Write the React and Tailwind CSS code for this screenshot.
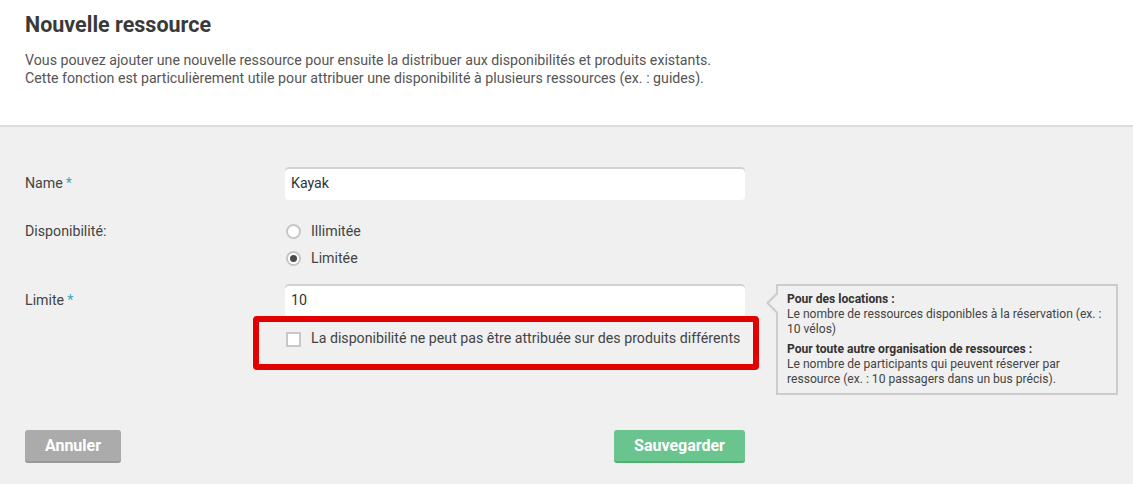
const Label = ({ children, required }) => (
  <div className="w-[260px] shrink-0 text-[14.2px] text-[#444]">
    {children}
    {required && <span className="ml-[3px] text-[#3ba8c0]">*</span>}
  </div>
);

const TextInput = ({ value }) => (
  <div className="w-[460px] h-[33px] rounded-[4px] bg-white shadow-[inset_0_2px_0_#d2d2d2] flex items-center px-[6px] text-[14.2px] text-[#333]">
    {value}
  </div>
);

const Radio = ({ checked, label }) => (
  <div className="flex items-center h-[27px]">
    <span className="w-[15px] h-[15px] rounded-full border-2 border-[#c6c6c6] bg-white flex items-center justify-center">
      {checked && <span className="w-[7px] h-[7px] rounded-full bg-[#4a4a4a]" />}
    </span>
    <span className="ml-[10px] text-[14.2px] text-[#444]">{label}</span>
  </div>
);

const App = () => {
  return (
    <div className="min-h-screen w-full bg-[#f0f0f0] font-['Roboto',sans-serif]">
      <div className="h-[127px] bg-white border-b-2 border-[#dcdcdc] px-[25px] pt-[10px]">
        <h1 className="text-[21.5px] leading-[30px] font-bold text-[#3a3a3a]">Nouvelle ressource</h1>
        <p className="mt-[11px] text-[14.2px] leading-[18px] text-[#555]">
          Vous pouvez ajouter une nouvelle ressource pour ensuite la distribuer aux disponibilités et produits existants.
          <br />
          Cette fonction est particulièrement utile pour attribuer une disponibilité à plusieurs ressources (ex. : guides).
        </p>
      </div>

      <div className="pl-[25px] pt-[40px]">
        <div className="flex items-center">
          <Label required>Name</Label>
          <TextInput value="Kayak" />
        </div>

        <div className="flex mt-[18px]">
          <div className="w-[260px] shrink-0 text-[14.2px] leading-[27px] text-[#444]">Disponibilité:</div>
          <div className="flex flex-col pl-[1px]">
            <Radio label="Illimitée" />
            <Radio checked label="Limitée" />
          </div>
        </div>

        <div className="flex items-center mt-[12px]">
          <Label required>Limite</Label>
          <div className="relative">
            <TextInput value="10" />
            {/* aide */}
            <div className="absolute left-[calc(100%+31px)] top-0 w-[342px] border-2 border-[#cccccc] bg-[#f0f0f0] pl-[9px] pt-[6px] pb-[6px] text-[12.1px] leading-[15px] text-[#444] whitespace-nowrap">
              <span className="absolute left-[-12px] top-[6px] w-0 h-0 border-y-[11px] border-y-transparent border-r-[11px] border-r-[#cccccc]" />
              <span className="absolute left-[-9px] top-[8px] w-0 h-0 border-y-[9px] border-y-transparent border-r-[9px] border-r-[#f0f0f0]" />
              <div className="font-bold text-[#333]">Pour des locations :</div>
              <div>
                Le nombre de ressources disponibles à la réservation (ex. :
                <br />
                10 vélos)
              </div>
              <div className="mt-[5px] font-bold text-[#333]">Pour toute autre organisation de ressources :</div>
              <div>
                Le nombre de participants qui peuvent réserver par
                <br />
                ressource (ex. : 10 passagers dans un bus précis).
              </div>
            </div>
          </div>
        </div>

        <div className="ml-[260px] mt-[11px] relative w-[460px] h-[22px] flex items-center pl-[1px]">
          <div className="absolute left-[-32px] right-[-14px] top-[-12px] bottom-[-20px] border-[6px] border-[#e30000] rounded-[4px]" />
          <span className="w-[15px] h-[15px] border-2 border-[#c8c8c8] bg-white" />
          <span className="ml-[10px] text-[14.2px] text-[#444]">
            La disponibilité ne peut pas être attribuée sur des produits différents
          </span>
        </div>

        <div className="w-[720px] flex justify-between mt-[80px]">
          <button className="w-[96px] h-[33px] rounded-[3px] bg-[#ababab] border-b-2 border-[#999] text-white text-[16px] font-bold">
            Annuler
          </button>
          <button className="w-[131px] h-[33px] rounded-[3px] bg-[#6ac48e] border-b-2 border-[#4fb074] text-white text-[16px] font-bold">
            Sauvegarder
          </button>
        </div>
      </div>
    </div>
  );
};

export default App;
